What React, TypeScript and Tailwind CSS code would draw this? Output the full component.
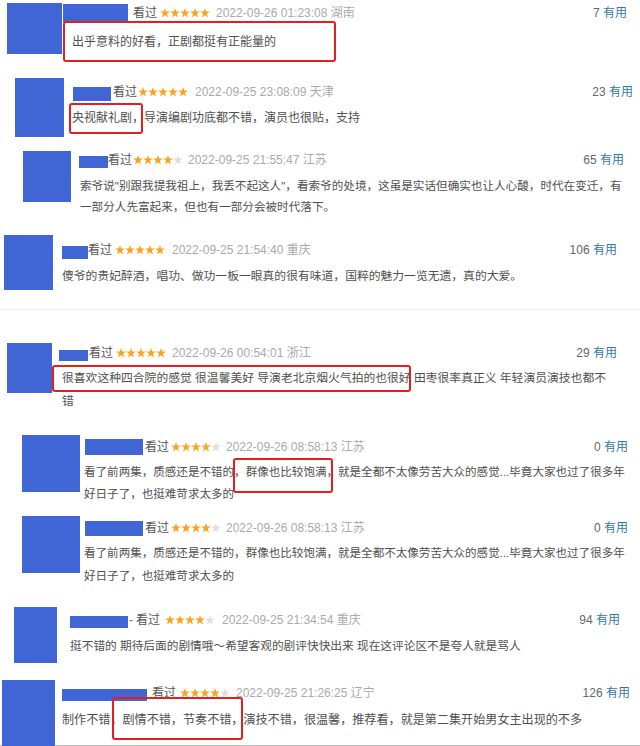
import React from "react";

const STAR = "5,0.1 6.2,3.5 9.85,3.6 6.95,5.85 8,9.4 5,7.3 2,9.4 3.05,5.85 0.15,3.6 3.8,3.5";

function Stars({ n, cls }: { n: number; cls: string }) {
  return (
    <span className={"flex shrink-0 " + cls}>
      {[0, 1, 2, 3, 4].map((i) => (
        <svg key={i} width="10" height="10" viewBox="0 0 10 10">
          <polygon points={STAR} fill={i < n ? "#fba320" : "#dedede"} />
        </svg>
      ))}
    </span>
  );
}

type HP = {
  nameCls: string;
  seenCls: string;
  starsCls: string;
  dateCls: string;
  n: number;
  date: string;
  loc: string;
  count: string;
  dash?: boolean;
};

function Header(p: HP) {
  return (
    <div className="flex h-[18px] items-center whitespace-nowrap text-[12px] leading-none">
      <div className={"shrink-0 bg-[#4066d6] " + p.nameCls} />
      {p.dash && <span className="ml-[1px] text-[#777]">-</span>}
      <span className={"text-[#555] " + p.seenCls}>看过</span>
      <Stars n={p.n} cls={p.starsCls} />
      <span className={"text-[#aaa] " + p.dateCls}>
        {p.date} {p.loc}
      </span>
      <span className="ml-auto text-[#666]">
        {p.count} <span className="text-[#3377aa]">有用</span>
      </span>
    </div>
  );
}

const box = "pointer-events-none absolute rounded-[3px] border-2 border-[#e3201f]";

export default function App() {
  return (
    <div className="h-[746px] w-[640px] overflow-hidden bg-white font-['Liberation_Sans','Noto_Sans_CJK_SC',sans-serif]">
      {/* Block 1 */}
      <div className="relative flex h-[70px]">
        <div className="ml-[7px] mt-[3px] h-[51px] w-[55px] shrink-0 bg-[#4066d6]" />
        <div className="ml-[1px] mr-[13px] mt-[4px] min-w-0 flex-1">
          <Header
            nameCls="h-[18px] w-[65px]"
            seenCls="ml-[5px]"
            starsCls="ml-[3px]"
            dateCls="ml-[6px]"
            n={5}
            date="2022-09-26 01:23:08"
            loc="湖南"
            count="7"
          />
          <p className="mt-[9px] whitespace-nowrap pl-[9px] text-[12px] leading-[22px] text-[#4f4f4f]">
            出乎意料的好看，正剧都挺有正能量的
          </p>
        </div>
        <div className={box + " left-[63px] top-[21px] h-[41px] w-[273px]"} />
      </div>

      {/* Block 2 */}
      <div className="relative flex h-[75px]">
        <div className="ml-[15px] mt-[8px] h-[59px] w-[49px] shrink-0 bg-[#4066d6]" />
        <div className="ml-[9px] mr-[7px] mt-[13px] min-w-0 flex-1">
          <Header
            nameCls="h-[14px] w-[38px] self-end"
            seenCls="ml-[2px]"
            starsCls="ml-[1px]"
            dateCls="ml-[7px]"
            n={5}
            date="2022-09-25 23:08:09"
            loc="天津"
            count="23"
          />
          <p className="-ml-[1px] mt-[6px] whitespace-nowrap text-[12px] leading-[22px] text-[#4f4f4f]">
            央视献礼剧，导演编剧功底都不错，演员也很贴，支持
          </p>
        </div>
        <div className={box + " left-[69px] top-[33px] h-[31px] w-[74px]"} />
      </div>

      {/* Block 3 */}
      <div className="relative flex h-[80px]">
        <div className="ml-[23px] mt-[6px] h-[51px] w-[48px] shrink-0 bg-[#4066d6]" />
        <div className="ml-[8px] mr-[16px] mt-[6px] min-w-0 flex-1">
          <Header
            nameCls="h-[12px] w-[29px] self-end mb-[1px]"
            seenCls="ml-0"
            starsCls="ml-[1px]"
            dateCls="ml-[5px]"
            n={4}
            date="2022-09-25 21:55:47"
            loc="江苏"
            count="65"
          />
          <p className="ml-[1px] mt-[6px] whitespace-nowrap text-[11.6px] leading-[21px] text-[#4f4f4f]">
            索爷说"别跟我提我祖上，我丢不起这人"，看索爷的处境，这虽是实话但确实也让人心酸，时代在变迁，有
            <br />
            一部分人先富起来，但也有一部分会被时代落下。
          </p>
        </div>
      </div>

      {/* Block 4 */}
      <div className="relative flex h-[85px] border-b border-[#ececec]">
        <div className="ml-[4px] mt-[10px] h-[55px] w-[49px] shrink-0 bg-[#4066d6]" />
        <div className="ml-[9px] mr-[23px] mt-[16px] min-w-0 flex-1">
          <Header
            nameCls="h-[13px] w-[26px] self-end"
            seenCls="ml-0"
            starsCls="ml-[3px]"
            dateCls="ml-[7px]"
            n={5}
            date="2022-09-25 21:54:40"
            loc="重庆"
            count="106"
          />
          <p className="mt-[6px] whitespace-nowrap text-[11.8px] leading-[22px] text-[#4f4f4f]">
            傻爷的贵妃醉酒，唱功、做功一板一眼真的很有味道，国粹的魅力一览无遗，真的大爱。
          </p>
        </div>
      </div>

      <div className="h-[30px]" />

      {/* Block 5 */}
      <div className="relative flex h-[75px]">
        <div className="ml-[7px] mt-[3px] h-[50px] w-[45px] shrink-0 bg-[#4066d6]" />
        <div className="ml-[7px] mr-[23px] mt-[4px] min-w-0 flex-1">
          <Header
            nameCls="h-[11px] w-[29px] self-end mb-[1px]"
            seenCls="ml-[1px]"
            starsCls="ml-[3px]"
            dateCls="ml-[6px]"
            n={5}
            date="2022-09-26 00:54:01"
            loc="浙江"
            count="29"
          />
          <p className="mt-[5px] whitespace-nowrap pl-[3px] text-[11.8px] leading-[23px] text-[#4f4f4f]">
            很喜欢这种四合院的感觉 很温馨美好 导演老北京烟火气拍的也很好 田枣很率真正义 年轻演员演技也都不
            <br />
            错
          </p>
        </div>
        <div className={box + " left-[52px] top-[25px] h-[27px] w-[359px]"} />
      </div>

      {/* Block 6 */}
      <div className="relative flex h-[90px]">
        <div className="ml-[22px] mt-[20px] h-[57px] w-[58px] shrink-0 bg-[#4066d6]" />
        <div className="ml-[5px] mr-[12px] mt-[23px] min-w-0 flex-1">
          <Header
            nameCls="h-[16px] w-[58px]"
            seenCls="ml-[2px]"
            starsCls="ml-[2px]"
            dateCls="ml-[5px]"
            n={4}
            date="2022-09-26 08:58:13"
            loc="江苏"
            count="0"
          />
          <p className="-ml-[1px] mt-[5px] whitespace-nowrap text-[11.55px] leading-[22px] text-[#4f4f4f]">
            看了前两集，质感还是不错的，群像也比较饱满，就是全都不太像劳苦大众的感觉...毕竟大家也过了很多年
            <br />
            好日子了，也挺难苛求太多的
          </p>
        </div>
        <div className={box + " left-[233px] top-[43px] h-[35px] w-[100px]"} />
      </div>

      {/* Block 7 */}
      <div className="relative flex h-[85px]">
        <div className="ml-[22px] mt-[11px] h-[57px] w-[58px] shrink-0 bg-[#4066d6]" />
        <div className="ml-[5px] mr-[12px] mt-[14px] min-w-0 flex-1">
          <Header
            nameCls="h-[15px] w-[58px]"
            seenCls="ml-[2px]"
            starsCls="ml-[2px]"
            dateCls="ml-[5px]"
            n={4}
            date="2022-09-26 08:58:13"
            loc="江苏"
            count="0"
          />
          <p className="-ml-[1px] mt-[5px] whitespace-nowrap text-[11.55px] leading-[23px] text-[#4f4f4f]">
            看了前两集，质感还是不错的，群像也比较饱满，就是全都不太像劳苦大众的感觉...毕竟大家也过了很多年
            <br />
            好日子了，也挺难苛求太多的
          </p>
        </div>
      </div>

      {/* Block 8 */}
      <div className="relative flex h-[85px]">
        <div className="ml-[14px] mt-[17px] h-[56px] w-[43px] shrink-0 bg-[#4066d6]" />
        <div className="ml-[13px] mr-[20px] mt-[21px] min-w-0 flex-1">
          <Header
            nameCls="h-[12px] w-[58px] self-end mb-[1px]"
            seenCls="ml-[3px]"
            starsCls="ml-[5px]"
            dateCls="ml-[7px]"
            n={4}
            date="2022-09-25 21:34:54"
            loc="重庆"
            count="94"
            dash
          />
          <p className="mt-[6px] whitespace-nowrap text-[11.7px] leading-[22px] text-[#4f4f4f]">
            挺不错的 期待后面的剧情哦～希望客观的剧评快快出来 现在这评论区不是夸人就是骂人
          </p>
        </div>
      </div>

      {/* Block 9 */}
      <div className="relative flex h-[71px] border-b border-[#bbbbbb]">
        <div className="ml-[2px] mt-[5px] h-[66px] w-[53px] shrink-0 bg-[#4066d6]" />
        <div className="ml-[7px] mr-[10px] mt-[9px] min-w-0 flex-1">
          <Header
            nameCls="h-[12px] w-[85px] self-end mb-[1px]"
            seenCls="ml-[5px]"
            starsCls="ml-[4px]"
            dateCls="ml-[6px]"
            n={4}
            date="2022-09-25 21:26:25"
            loc="辽宁"
            count="126"
          />
          <p className="mt-[7px] whitespace-nowrap text-[12.1px] leading-[22px] text-[#4f4f4f]">
            制作不错，剧情不错，节奏不错，演技不错，很温馨，推荐看，就是第二集开始男女主出现的不多
          </p>
        </div>
        <div className={box + " left-[112px] top-[22px] h-[43px] w-[131px]"} />
      </div>
    </div>
  );
}
